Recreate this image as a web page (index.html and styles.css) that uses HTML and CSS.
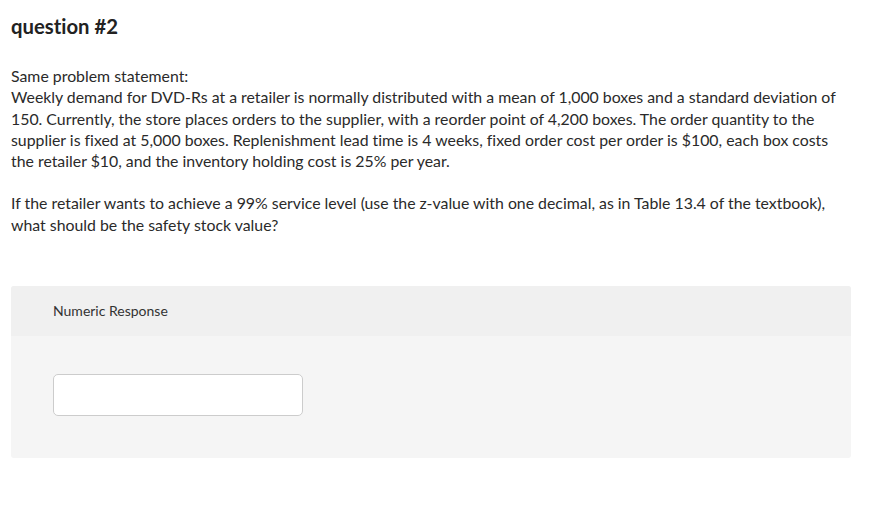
FILE: index.html
```html
<!DOCTYPE html>
<html>
<head>
<meta charset="utf-8">
<link rel="stylesheet" href="styles.css">
</head>
<body>
<main class="page">
  <h1 class="title">question #2</h1>
  <div class="prompt">
    <p>Same problem statement:<br>Weekly demand for DVD-Rs at a retailer is normally distributed with a mean of 1,000 boxes and a standard deviation of 150. Currently, the store places orders to the supplier, with a reorder point of 4,200 boxes. The order quantity to the supplier is fixed at 5,000 boxes. Replenishment lead time is 4 weeks, fixed order cost per order is $100, each box costs the retailer $10, and the inventory holding cost is 25% per year.</p>
    <p>If the retailer wants to achieve a 99% service level (use the z-value with one decimal, as in Table 13.4 of the textbook), what should be the safety stock value?</p>
  </div>
  <section class="panel">
    <div class="panel-head">Numeric Response</div>
    <div class="panel-body">
      <input class="answer" type="text">
    </div>
  </section>
</main>
</body>
</html>
```
FILE: styles.css
```css
html, body {
  margin: 0;
  padding: 0;
  background: #fff;
}
body {
  font-family: Lato, "Open Sans", sans-serif;
  font-variant-ligatures: none;
  color: #2a2a2a;
}
.page {
  padding: 14px 0 0 11px;
}
.title {
  margin: 0;
  font-size: 20.3px;
  font-weight: 700;
  line-height: 24px;
  color: #222;
}
.prompt {
  width: 829px;
  margin-top: 27px;
  font-size: 15.85px;
  line-height: 21.3px;
}
.prompt p {
  margin: 0 0 21px 0;
}
.panel {
  margin-top: 51px;
  width: 840px;
  border-radius: 3px;
  overflow: hidden;
  background: #f5f5f5;
}
.panel-head {
  height: 50px;
  box-sizing: border-box;
  padding: 16px 42px 0;
  background: #f0f0f0;
  font-size: 14px;
  line-height: 18px;
  color: #333;
}
.panel-body {
  padding: 38px 42px 42px;
}
.answer {
  display: block;
  box-sizing: border-box;
  width: 250px;
  height: 42px;
  margin: 0;
  border: 1px solid #cccccc;
  border-radius: 5px;
  background: #fff;
  outline: none;
}
```
